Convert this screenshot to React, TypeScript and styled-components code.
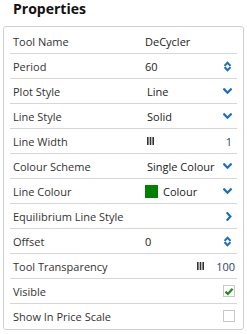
import React from "react";
import styled, { createGlobalStyle } from "styled-components";

const Global = createGlobalStyle`
  html, body { margin: 0; padding: 0; background: #fff; }
  body { font-family: "Open Sans", "Liberation Sans", sans-serif; }
`;

const Page = styled.div`
  width: 247px;
  height: 334px;
  box-sizing: border-box;
  padding: 0 3px 0 3px;
`;

const Title = styled.h1`
  margin: 0 0 7px 10px;
  font-size: 14px;
  line-height: 19px;
  font-weight: 700;
  color: #111;
  position: relative;
  top: -1px;
`;

const Panel = styled.div`
  border: 1px solid #cfcfcf;
  border-radius: 3px;
  padding: 2px 6px 1px 6px;
  width: 241px;
  box-sizing: border-box;
`;

const Row = styled.div<{ $last?: boolean }>`
  display: grid;
  grid-template-columns: 132px 1fr auto;
  align-items: center;
  height: 24px;
  padding: 0 5px 0 3px;
  border-bottom: ${(p) => (p.$last ? "none" : "1px solid #d6d6d6")};
  font-size: 11px;
  color: #333;
`;

const Label = styled.span`
  white-space: nowrap;
`;

const Value = styled.span<{ $indent?: number }>`
  color: #222;
  padding-left: ${(p) => p.$indent ?? 0}px;
  display: flex;
  align-items: center;
  white-space: nowrap;
`;

const Right = styled.span<{ $shift?: number }>`
  display: flex;
  align-items: center;
  justify-content: flex-end;
  margin-right: ${(p) => p.$shift ?? 0}px;
`;

const Num = styled.span<{ $gap?: number }>`
  color: #2b3f6b;
  margin-left: ${(p) => p.$gap ?? 0}px;
`;

const Swatch = styled.span`
  width: 13px;
  height: 13px;
  background: #008000;
  margin-right: 5px;
`;

const Check = styled.span`
  width: 12px;
  height: 12px;
  box-sizing: border-box;
  border: 1px solid #c8c8c8;
  display: flex;
  align-items: center;
  justify-content: center;
  margin-right: -3px;
`;

const Bars = () => (
  <svg width="7" height="8" viewBox="0 0 7 8">
    <rect x="0" y="0" width="1.6" height="8" fill="#333" />
    <rect x="2.7" y="0" width="1.6" height="8" fill="#333" />
    <rect x="5.4" y="0" width="1.6" height="8" fill="#333" />
  </svg>
);

const ChevronDown = () => (
  <svg width="9" height="7" viewBox="0 0 9 7">
    <path d="M1.2 1.4 L4.5 4.7 L7.8 1.4" fill="none" stroke="#1b6fc2" strokeWidth="2.3" strokeLinecap="square" />
  </svg>
);

const ChevronRight = () => (
  <svg width="6" height="9" viewBox="0 0 6 9">
    <path d="M1.4 1.2 L4.4 4.5 L1.4 7.8" fill="none" stroke="#1b6fc2" strokeWidth="2.2" strokeLinecap="square" />
  </svg>
);

const Spinner = () => (
  <svg width="7" height="11" viewBox="0 0 7 11">
    <path d="M1.2 4.2 L3.5 1.8 L5.8 4.2" fill="none" stroke="#1b6fc2" strokeWidth="2" strokeLinecap="square" />
    <path d="M1.2 6.8 L3.5 9.2 L5.8 6.8" fill="none" stroke="#1b6fc2" strokeWidth="2" strokeLinecap="square" />
  </svg>
);

const Tick = () => (
  <svg width="10" height="9" viewBox="0 0 10 9">
    <path d="M1.5 4.6 L3.9 7 L8.6 1.8" fill="none" stroke="#1f8c1f" strokeWidth="2.2" />
  </svg>
);

export default function App() {
  return (
    <>
      <Global />
      <Page>
        <Title>Properties</Title>
        <Panel>
          <Row>
            <Label>Tool Name</Label>
            <Value>DeCycler</Value>
            <span />
          </Row>
          <Row>
            <Label>Period</Label>
            <Value>60</Value>
            <Right $shift={1}><Spinner /></Right>
          </Row>
          <Row>
            <Label>Plot Style</Label>
            <Value $indent={2}>Line</Value>
            <Right><ChevronDown /></Right>
          </Row>
          <Row>
            <Label>Line Style</Label>
            <Value $indent={2}>Solid</Value>
            <Right><ChevronDown /></Right>
          </Row>
          <Row>
            <Label>Line Width</Label>
            <Value $indent={2}><Bars /></Value>
            <Right><Num>1</Num></Right>
          </Row>
          <Row>
            <Label>Colour Scheme</Label>
            <Value $indent={2}>Single Colour</Value>
            <Right><ChevronDown /></Right>
          </Row>
          <Row>
            <Label>Line Colour</Label>
            <Value><Swatch />Colour</Value>
            <Right><ChevronDown /></Right>
          </Row>
          <Row>
            <Label>Equilibrium Line Style</Label>
            <span />
            <Right><ChevronRight /></Right>
          </Row>
          <Row>
            <Label>Offset</Label>
            <Value>0</Value>
            <Right $shift={1}><Spinner /></Right>
          </Row>
          <Row>
            <Label>Tool Transparency</Label>
            <span />
            <Right $shift={-3}><Bars /><Num $gap={12}>100</Num></Right>
          </Row>
          <Row>
            <Label>Visible</Label>
            <span />
            <Right><Check><Tick /></Check></Right>
          </Row>
          <Row $last>
            <Label>Show In Price Scale</Label>
            <span />
            <Right><Check /></Right>
          </Row>
        </Panel>
      </Page>
    </>
  );
}
